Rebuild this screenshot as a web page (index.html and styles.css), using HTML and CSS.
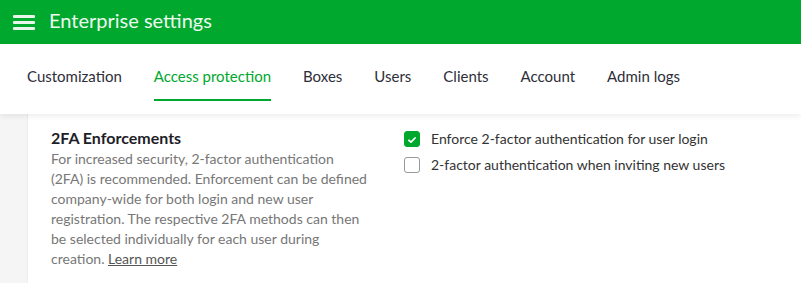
FILE: index.html
```html
<!DOCTYPE html>
<html>
  <head>
    <meta name="viewport" content="width=device-width, initial-scale=1" />
    <title>Enterprise settings</title>
    <link rel="stylesheet" href="styles.css">
  </head>

  <body>
    <header class="topbar">
      <span class="burger"><i></i><i></i><i></i></span>
      <h1>Enterprise settings</h1>
    </header>

    <nav class="tabs">
      <a href="#">Customization</a>
      <a href="#" class="active">Access protection</a>
      <a href="#">Boxes</a>
      <a href="#">Users</a>
      <a href="#">Clients</a>
      <a href="#">Account</a>
      <a href="#">Admin logs</a>
    </nav>

    <main class="page">
      <section class="card">
        <div class="intro">
          <h2>2FA Enforcements</h2>
          <p>For increased security, 2-factor authentication (2FA) is recommended. Enforcement can be defined company-wide for both login and new user registration. The respective 2FA methods can then be selected individually for each user during creation. <a href="#">Learn more</a></p>
        </div>
        <div class="options">
          <label class="check">
            <span class="box checked">
              <svg viewBox="0 0 16 16" width="16" height="16"><path d="M4.5 8.3l2.3 2.2 4.7-4.8" fill="none" stroke="#fff" stroke-width="2" stroke-linecap="round" stroke-linejoin="round"/></svg>
            </span>
            Enforce 2-factor authentication for user login
          </label>
          <label class="check">
            <span class="box"></span>
            2-factor authentication when inviting new users
          </label>
        </div>
      </section>
    </main>
  </body>
</html>
```

FILE: styles.css
```css
/* ------------------------------ reset ------------------------------ */
* {
  margin: 0;
  padding: 0;
  box-sizing: border-box;
}
body {
  font-family: "Lato", "Open Sans", sans-serif;
  background: #f5f5f5;
  color: #333;
  overflow: hidden;
}

/* ------------------------------ top bar ------------------------------ */
.topbar {
  height: 44px;
  background: #00a82d;
  display: flex;
  align-items: center;
  padding-left: 13px;
  gap: 14px;
}
.burger {
  display: flex;
  flex-direction: column;
  gap: 3px;
  width: 22px;
}
.burger i {
  display: block;
  height: 3px;
  background: #e8f5ea;
  border-radius: 1px;
}
.topbar h1 {
  font-size: 20px;
  font-weight: 400;
  color: #eef9f0;
  margin-top: -4px;
}

/* ------------------------------ tabs ------------------------------ */
.tabs {
  height: 70px;
  background: #fff;
  display: flex;
  align-items: center;
  padding: 0 0 6px 27px;
  gap: 32px;
  box-shadow: 0 2px 6px rgba(0, 0, 0, 0.08);
  position: relative;
  z-index: 1;
}
.tabs a {
  font-size: 15px;
  color: #2e2e38;
  text-decoration: none;
  position: relative;
}
.tabs a.active {
  color: #00a82d;
}
.tabs a.active::after {
  content: "";
  position: absolute;
  left: 0;
  right: 0;
  top: 32px;
  height: 2px;
  background: #00a82d;
}

/* ------------------------------ content ------------------------------ */
.page {
  padding-left: 27px;
}
.card {
  background: #fff;
  height: 169px;
  display: flex;
  padding: 14px 0 0 23px;
  border-left: 1px solid #ececec;
}
.intro {
  width: 317px;
}
.intro h2 {
  font-size: 16px;
  font-weight: 700;
  color: #1e1e28;
  line-height: 20px;
}
.intro p {
  font-size: 14px;
  line-height: 20px;
  color: #777;
  margin-top: 1px;
}
.intro p a {
  color: #555;
  text-decoration: underline;
}
.options {
  margin-left: 36px;
  padding-top: 2px;
  display: flex;
  flex-direction: column;
  gap: 9px;
}
.check {
  display: flex;
  align-items: center;
  gap: 11px;
  font-size: 14px;
  color: #333;
}
.box {
  width: 16px;
  height: 16px;
  border: 1px solid #999;
  border-radius: 3px;
  background: #fff;
  display: flex;
}
.box.checked {
  background: #00a82d;
  border-color: #00a82d;
}
```
